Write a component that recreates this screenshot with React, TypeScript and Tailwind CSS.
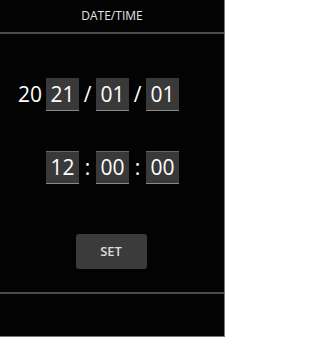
const font = { fontFamily: '"Open Sans", "Noto Sans", sans-serif' };

function Field({ value, top = false }: { value: string; top?: boolean }) {
    return (
        <div
            className={`w-[33px] h-[33px] flex items-center justify-center bg-[#383938] border-b border-[#8a8a8a] text-white text-[21px] font-medium leading-none ${top ? "border-t border-t-[#666]" : ""}`}
        >
            {value}
        </div>
    )
}

function Sep({ char }: { char: string }) {
    return (
        <div className="w-[17px] flex items-center justify-center text-white text-[21px] font-medium leading-none">
            {char}
        </div>
    )
}

export default function App() {
    return (
        <div
            className="w-[225px] h-[337px] bg-[#030303] border-r border-b border-[#7a7a7a] flex flex-col"
            style={font}
        >
            <div className="h-[34px] flex items-center justify-center border-b-2 border-[#4a4c4a] text-[12px] text-[#e4e4e4]">
                DATE/TIME
            </div>

            <div className="mt-[44px] flex">
                <div className="w-[46px] pr-[4px] flex items-center justify-end text-white text-[21px] font-medium leading-none">
                    20
                </div>
                <Field value="21" />
                <Sep char="/" />
                <Field value="01" />
                <Sep char="/" />
                <Field value="01" />
            </div>

            <div className="mt-[40px] flex pl-[46px]">
                <Field value="12" top />
                <Sep char=":" />
                <Field value="00" top />
                <Sep char=":" />
                <Field value="00" top />
            </div>

            <div className="mt-[50px] flex justify-center pr-[2px]">
                <button className="w-[71px] h-[35px] rounded-[3px] bg-[#3a3b3a] text-[#dcdcdc] text-[13px] font-semibold">
                    SET
                </button>
            </div>

            <div className="mt-[23px] border-t-2 border-[#4a4c4a]" />
        </div>
    )
}
